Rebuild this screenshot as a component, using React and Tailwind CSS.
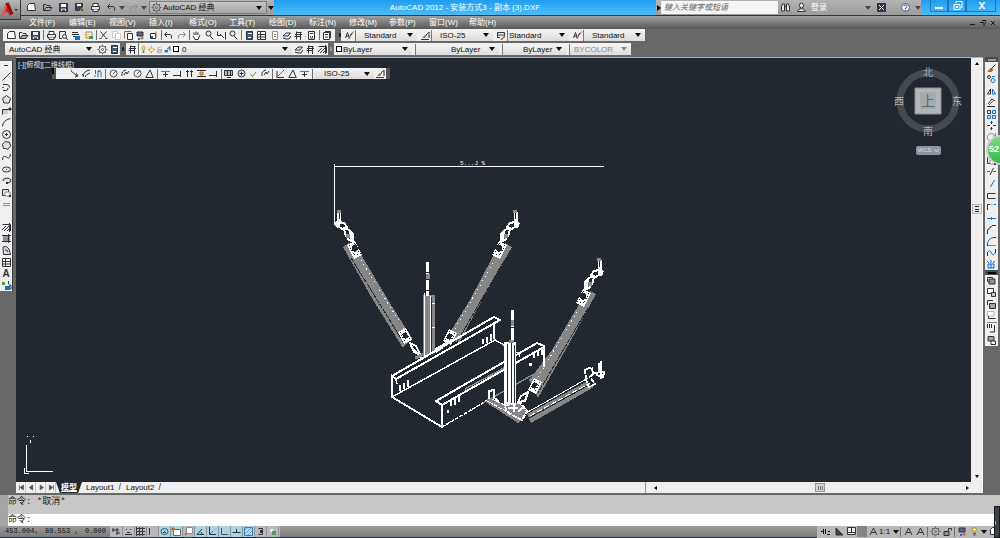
import React from 'react';
import clsx from 'clsx';

const D = '#2f3238';
const G = '#8a8d92';
const B = '#1273c4';
const O = '#b5642a';
const Y = '#f2b632';

// each glyph is a list of [path, stroke, fill] on an 11x11 grid
const GLYPHS = {
  new: [['M1.5 8.5V3.5L3.5 1.5H8.5L9.5 8.5Z', D, '#fff']],
  open: [['M1.5 8.5V2.5H4L5 3.5H8V5', D, 'none'], ['M2 8.5L4 5.5H10L8 8.5Z', D, '#9fb0bf']],
  save: [['M1.5 1.5H9.5V9.5H1.5Z', D, '#3c4654'], ['M3 2H8V5H3Z', 'none', '#f4f4f4'], ['M3.5 9V7H7.5V9', '#ddd', 'none']],
  saveas: [['M1.5 1.5H8.5V8.5H1.5Z', D, '#3c4654'], ['M3 2H7V4H3Z', 'none', '#fff'], ['M5 10L9.5 5', Y, 'none']],
  print: [['M3 4V1.5H8V4', D, '#fff'], ['M1.5 4.5H9.5V7.5H1.5Z', D, '#e8e8e8'], ['M3 7.5V9.5H8V7.5', D, '#fff']],
  undo: [['M4 2L1.5 4.5L4 7', D, 'none'], ['M2 4.5H7Q9.5 5 8.5 8.5', D, 'none']],
  redo: [['M7 2L9.5 4.5L7 7', G, 'none'], ['M9 4.5H4Q1.5 5 2.5 8.5', G, 'none']],
  preview: [['M1.5 1.5H7.5V5M1.5 1.5V8.5H4', D, 'none'], ['M4.5 6.5A2 2 0 1 0 8.5 6.5A2 2 0 1 0 4.5 6.5M8 8L10 10', D, '#dbe8f4']],
  publish: [['M2 2.5H8M2 4.5H9M3 6.5H8', D, 'none'], ['M5 6H10V10H5Z', 'none', B]],
  dwf: [['M3 2H9V8H3Z', G, '#fff7d8'], ['M1.5 4.5H6M2 7H8', Y, 'none'], ['M6 6H10V9H6Z', 'none', '#3f9c6b']],
  cut: [['M2.5 1.5L7.5 7.5M8.5 1.5L3.5 7.5', D, 'none'], ['M1.5 8.5H3.5M7.5 8.5H9.5', D, 'none']],
  copy: [['M1.5 1.5H6.5V7.5H1.5Z', '#c9c9c9', '#fff'], ['M4.5 3.5H9.5V9.5H4.5Z', '#c9c9c9', '#fff']],
  paste: [['M1.5 8.5V1.5H8.5', '#8a6a46', 'none'], ['M4.5 3.5H9.5V9.5H4.5Z', D, '#fff']],
  match: [['M2 2H8V6H2Z', D, '#596a7d'], ['M5 8H9M7 6V10', O, 'none'], ['M3 8H5V10H3Z', 'none', B]],
  block: [['M2.5 3.5H7.5V8.5H2.5Z', D, '#fff'], ['M8 1.5V8', O, 'none'], ['M3 6H5V8H3Z', 'none', B]],
  pan: [['M3 5V2.5M5 5V1.5M7 5V2.5M2 6L4 9.5H7L9 5', D, '#fff']],
  zoom: [['M2 3.5A2.5 2.5 0 1 0 7 3.5A2.5 2.5 0 1 0 2 3.5M6 6L9.5 9.5', D, 'none']],
  zoomw: [['M1.5 1.5V5.5H5M4 4L8 8M9.5 2V9.5', D, 'none']],
  props: [['M2.5 1.5H8.5V9.5H2.5Z', D, '#4b5a70'], ['M4 3.5H8M4 7.5H7', '#fff', 'none'], ['M6 5H8V7H6Z', 'none', B]],
  table: [['M1.5 1.5H9.5V9.5H1.5ZM1.5 4.5H9.5M1.5 7H9.5M4.5 1.5V9.5', D, '#fff']],
  sheet: [['M3.5 1.5H8.5V9.5H3.5ZM5 4.5H7M5 6.5H7', '#9a8f7a', '#fff']],
  calc: [['M2.5 1.5H8.5V9.5H2.5Z', D, '#fff'], ['M4 3.5H7M4 6.5H5M6 6.5H7M4 8H7', D, 'none']],
  help: [['M1.5 5.5A4 4 0 1 0 9.5 5.5A4 4 0 1 0 1.5 5.5', '#4a5b78', '#f2f6fb'], ['M4 4.5Q4 3 5.5 3T7 4.5T5.5 6V7M5.5 8V9', '#2e57a6', 'none']],
  sheets: [['M2.5 2.5H8.5V9.5H2.5ZM4 1.5H9.5V8', D, '#fff'], ['M4 4.5H7M4 7H7', D, 'none']],
  brush: [['M9.5 1.5L5 8', O, 'none'], ['M8 3L6 6', D, 'none'], ['M1.5 8L3.5 2.5L5 7M2 6H5', D, 'none'], ['M4 7H7L5 9.5Z', 'none', O]],
  dimbrush: [['M1 9.5H9M3 8L9 2V8', D, 'none'], ['M2 8L5 5H7L5 8Z', 'none', O]],
  tablebrush: [['M1.5 2.5H8.5V7.5M1.5 2.5V7.5H4M1.5 5H8', D, '#fff'], ['M4 10L9 5V7L6 10Z', 'none', O]],
  gear: [['M2 5.5A3.5 3.5 0 1 0 9 5.5A3.5 3.5 0 1 0 2 5.5M4.5 5.5A1 1 0 1 0 6.5 5.5A1 1 0 1 0 4.5 5.5', '#5d6168', 'none'], ['M5.5 0.5V2M5.5 9V10.5M0.5 5.5H2M9 5.5H10.5M2 2L3 3M8 8L9 9M9 2L8 3M2 9L3 8', '#5d6168', 'none']],
  layers: [['M3 2.5H8.5M2 4.5H9M1.5 6.5H7M3.5 1.5V9.5M7.5 3V10', D, 'none']],
  layerset: [['M2 6L5 3H9.5L7 6ZM2 8L5 9H8L10 6', D, '#dfe5eb']],
  bulb: [['M3.5 3.5A2 2 0 1 1 7.5 3.5Q7 5 6.5 6H4.5Q4 5 3.5 3.5Z', '#b88d2c', '#ffe680'], ['M4.5 7.5H6.5M4.5 9H6.5', D, 'none']],
  sun: [['M3 4H8V8H3Z', Y, '#fff2a0'], ['M5.5 1V3M1 5.5H3M8 5.5H10M5.5 8V10M2 2L3 3', '#b0882c', 'none']],
  lock: [['M3 5.5H8V9.5H3Z', '#a8acb2', '#c5c9ce'], ['M4 5V3H7', '#a8acb2', 'none']],
  unlock: [['M2 5.5H7V9.5H2Z', D, '#8b9098'], ['M6.5 5V2.5H9.5V4.5', D, 'none']],
  vp: [['M2 6H6V9H2Z', 'none', B], ['M5 5L8.5 2V7', D, '#9bd0d6']],
  line: [['M1.5 9.5L9.5 1.5', D, 'none']],
  pline: [['M2 2.5H6Q8.5 3 8.5 5.5M2 8.5H5Q7 8.5 7 6', D, 'none'], ['M1 5H3V6H1Z', 'none', B]],
  polygon: [['M5.5 1.5L9.5 4.5L8 9H3L1.5 4.5Z', D, '#e2e7ec']],
  rect: [['M1.5 8.5V3.5H9.5', D, 'none'], ['M2 4H7V8H2Z', 'none', '#c9ced6'], ['M8 2H10V4H8Z', D, D]],
  arc: [['M1.5 9.5Q2 3 9.5 1.5', D, 'none']],
  circle: [['M1.5 5.5A4 4 0 1 0 9.5 5.5A4 4 0 1 0 1.5 5.5', D, '#eceff2'], ['M4 5.5H7M5.5 4V7', D, 'none']],
  cloud: [['M2.5 3Q4 0.5 6 2Q9 1 9 4Q10.5 6 8.5 7.5Q7 10.5 4.5 8.5Q1.5 9.5 2 6.5Q0.5 4.5 2.5 3', D, '#dde1e6']],
  spline: [['M1.5 8Q2 3 4.5 4.5T7.5 6Q9 6 9.5 2', D, 'none']],
  ellipse: [['M1.5 5.5A4 2.5 0 1 0 9.5 5.5A4 2.5 0 1 0 1.5 5.5', D, '#eceff2'], ['M5 5.5H6', D, 'none']],
  earc: [['M2 6A4 2.5 0 1 1 7 8', D, '#dde1e6'], ['M5 7H7V9H5Z', 'none', D]],
  insert: [['M1.5 2.5H7.5V8.5H1.5Z', D, '#e2e7ec'], ['M4 5H9V9H4Z', G, '#fff'], ['M8 8H10V10H8Z', 'none', D]],
  point: [['M2 4.5H9M2 6.5H9', G, 'none']],
  dot: [['M5 5H6V6H5Z', 'none', '#fff']],
  hatch: [['M1.5 2.5H9.5V9M3 9L9 3M1 8L5 4M6 9L9 6M8.5 1V10', D, 'none']],
  gradient: [['M2 3H9V8H2Z', 'none', '#8b9098'], ['M1 2.5H10M1 8.5H10M7.5 1V10', D, 'none']],
  region: [['M2 2Q6 0 8 4L9.5 9.5H2.5Z', D, '#d5dae0'], ['M4 5Q6 4 7 7', D, 'none']],
  addsel: [['M1 2H4V5H1Z', 'none', '#5f9a35'], ['M7.5 1V4M8 5H10V9H8', D, 'none'], ['M4 6H9V10H4Z', 'none', B]],
  dimlin: [['M2 3L8 8M7 5L9 8L6 9', D, 'none'], ['M1 2H3', G, 'none']],
  dimarc: [['M2 9Q2 3 9 2M4 9Q5 6 9 5M1 6L3 8', D, 'none']],
  ordinate: [['M2.5 2V6M1 8H3M5 3V9M8 4V9', B, 'none'], ['M5 3H8', D, 'none']],
  radius: [['M2 5.5A3.5 3.5 0 1 0 9 5.5A3.5 3.5 0 1 0 2 5.5M5 6L8 3', '#55595f', 'none']],
  jogged: [['M2 8Q1 3 6 2M4 7L6 4L7 6L9 3', D, 'none']],
  angular: [['M1.5 9.5H9.5M2 9L6 2L9 9', D, 'none']],
  quick: [['M1 3.5H10', O, 'none'], ['M3 6.5H8M5.5 4V9', D, 'none']],
  baseline: [['M1 7.5H8M8.5 3V9', D, 'none']],
  continue: [['M3.5 2V9M7.5 2V9M2 3.5H5M6 3.5H9', D, 'none']],
  space: [['M1 2.5H10M1 8.5H10', D, 'none'], ['M4 4H7V7H4Z', O, Y]],
  tol: [['M1.5 2.5H9.5V7.5H1.5ZM4.5 2V8M7.5 2V8M4 9.5H8', D, '#bbb']],
  center: [['M2 5.5A3.5 3.5 0 1 0 9 5.5A3.5 3.5 0 1 0 2 5.5M3.5 5.5H7.5M5.5 3.5V7.5', D, 'none']],
  check: [['M2.5 6L4.5 8.5L8 4', '#4e9c2d', 'none']],
  oblique: [['M1.5 9.5H9M2 9V3M3 8L9 2', D, 'none'], ['M4 7L8 3', O, 'none']],
  erase: [['M9.5 1.5L5 6', D, 'none'], ['M4.5 5.5L2 8.5H5.5L7 6.5Z', O, O]],
  copyobj: [['M1.5 3A1.5 1.5 0 1 0 4.5 3A1.5 1.5 0 1 0 1.5 3', D, 'none'], ['M6 2.5H9M5 6A1.5 1.5 0 1 0 9 7A1.5 1.5 0 1 0 5 6', B, 'none']],
  mirror: [['M4.5 3V8H1.5Z', D, 'none'], ['M6.5 3V8H9.5Z', B, 'none']],
  offset: [['M2 7L6 2L9 4M1 9.5H9', D, 'none'], ['M3 8L7 4', B, 'none']],
  array: [['M1.5 1.5H4.5V4.5H1.5Z', D, 'none'], ['M6.5 1.5H9.5V4.5H6.5ZM1.5 6.5H4.5V9.5H1.5ZM6.5 6.5H9.5V9.5H6.5Z', B, '#cfe4f6']],
  move: [['M5.5 1V4M5.5 7V10M1 5.5H4M7 5.5H10M4.5 2.5H6.5M4.5 8.5H6.5', D, 'none']],
  rotate: [['M8.5 3A4 4 0 1 0 9 7', G, 'none'], ['M9.5 1V4H7', G, 'none']],
  trim: [['M1 5.5H4M7 5.5H10', B, 'none'], ['M7.5 2L4 9', D, 'none']],
  extend: [['M8.5 2L4.5 9', B, 'none']],
  break1: [['M9.5 3.5H1.5V8.5H9.5', D, 'none']],
  break2: [['M1.5 9V3.5H4', D, 'none'], ['M5.5 3.5H6.5M8 3.5H10', B, 'none']],
  join: [['M1 5.5H10M5.5 4V7', B, 'none']],
  chamfer: [['M1.5 10V6L5.5 2', D, '#dfe3e8'], ['M2 6L6 2', B, 'none'], ['M6 1.5H10', D, 'none']],
  fillet: [['M1.5 10V8M8 1.5H10', D, 'none'], ['M1.5 8Q2 2 8 1.5', B, 'none'], ['M2 9.5H10', G, 'none']],
  blend: [['M1.5 9V5M9.5 6V2', D, 'none'], ['M2 5Q4 2 5.5 6T9 6', B, 'none']],
  explode: [['M2 5H8V9H2Z', B, '#cfe4f6'], ['M5 1V4M1 2L3 4M9 2L7 4M5 5V9', B, 'none']],
  front: [['M1.5 1.5H6.5V5.5H1.5Z', D, '#fff'], ['M3 3H9V8H3Z', D, '#8d939b']],
  back: [['M1.5 1.5H7.5V6.5H1.5Z', D, '#fff'], ['M5.5 5.5H9.5V9.5H5.5Z', D, '#c6cad0']],
  above: [['M1.5 6V1.5H7', D, 'none'], ['M3.5 4.5H9.5V9.5H3.5Z', D, '#9aa0a8']],
  under: [['M1.5 1.5H8V6H1.5Z', '#b5b9be', '#fff'], ['M2.5 6V8.5H9.5', D, 'none']],
  annot: [['M1.5 1V5M3.5 1V5M5.5 1V5M8.5 2V9H4', D, 'none']],
  hatchback: [['M2 1.5H8V6H2Z', D, '#9aa0a8'], ['M5 6H9.5V9.5H5Z', D, '#fff']],
  binoc: [['M2.5 2H4.5V9H1.5V5ZM6.5 2H8.5L9.5 5V9H6.5Z', D, '#e3e5e8'], ['M4.5 4.5H6.5', D, 'none']],
  user: [['M3.5 3.5A2 2.5 0 1 0 7.5 3.5A2 2.5 0 1 0 3.5 3.5M1.5 9.5Q2 7 5.5 6.5Q9 7 9.5 9.5Z', D, '#e8eaed']],
  exchange: [['M1.5 1.5H9.5V9.5H1.5Z', D, '#32394a'], ['M3 3L8 8M8 3L3 8', '#fff', 'none']],
  grid: [['M1.5 1V10M4.5 1V10M7.5 1V10M1 2.5H10M1 5.5H10M1 8.5H10', '#34373c', 'none']],
  snap: [['M2 8.5H9M4 6.5H7M3 3.5H4M7 3.5H8', D, 'none']],
  infer: [['M2 2V6M1 4H8M6 2V9M5 7H9', D, 'none']],
  ortho: [['M2.5 2V9', D, 'none']],
  polar: [['M2 5.5A3.5 3 0 1 0 9 5.5A3.5 3 0 1 0 2 5.5M4 6.5H7M5.5 5V7', '#35576c', 'none']],
  osnap: [['M2.5 3.5H9.5V9.5H2.5Z', '#5f6a73', '#fff'], ['M1 2H3V4H1Z', O, O]],
  osnap3d: [['M3.5 1.5H9.5V7.5H3.5Z', G, '#fff'], ['M2 7H4V9H2Z', 'none', O]],
  angle: [['M2 8.5H9M2 8.5L7 3M6 6L7 8', D, 'none']],
  ducs: [['M2.5 1V8.5H9', D, 'none'], ['M4 7L9 2', Y, 'none'], ['M3 8L6 5', O, 'none']],
  lwt: [['M2.5 2V8.5H9', '#35576c', 'none']],
  dyn: [['M1.5 6.5H9.5M5.5 3V7', D, 'none']],
  tpy: [['M1.5 1.5H9.5V9.5H1.5Z', '#3d7eb5', '#b4dcf4'], ['M2 4L4 2M2 8L8 2M5 9L9 5', '#5d9fd2', 'none']],
  qp: [['M3.5 2.5H7.5V8.5H3.5', D, 'none'], ['M5 4H7V7H5Z', 'none', D]],
  sc: [['M3 3H6V6H3Z', 'none', '#eee'], ['M5 5H9V9H5Z', 'none', '#4da54b']],
  model: [['M1 5.5H3M3.5 3V8M5.5 3V8M8 5.5H10M7 8.5H10', '#111', 'none']],
  qv: [['M2 2V9H9Z', D, '#444']],
  qvd: [['M1.5 1.5H9.5V8.5H1.5Z', D, '#f0f0f0'], ['M1 6.5H10M5.5 2V6', D, 'none']],
  scale: [['M2 9L5.5 2L9 9M3.5 6.5H7.5', D, 'none']],
};

const FONT = "font-['Liberation_Sans','Noto_Sans_CJK_SC',sans-serif]";
const MONO = "font-['Liberation_Mono','Noto_Sans_CJK_SC',monospace]";

function Glyph({ name, size = 11 }) {
  return (
    <svg width={size} height={size} viewBox="0 0 11 11" aria-hidden="true" className="block shrink-0">
      {GLYPHS[name].map(([d, stroke, fill]) => (
        <path key={d} d={d} stroke={stroke} fill={fill} />
      ))}
    </svg>
  );
}

function Tool({ name, active, className }) {
  return (
    <button
      type="button"
      aria-label={name}
      className={clsx('flex h-3 w-3 shrink-0 items-center justify-center', active && 'bg-[#a9d3df]', className)}
    >
      <Glyph name={name} />
    </button>
  );
}

function Caret({ color = '#111' }) {
  return (
    <svg width="6" height="4" viewBox="0 0 6 4" aria-hidden="true" className="block shrink-0">
      <path d="M0 0H6L3 4Z" fill={color} />
    </svg>
  );
}

const Sep = () => <span className="mx-px h-2.5 w-px shrink-0 bg-[#6f6f6f]" />;

// "|" in a list of tools stands for a separator
function Tools({ items }) {
  return items.map((item, i) => (item === '|' ? <Sep key={i} /> : <Tool key={i} name={item} />));
}

function Combo({ label, value, className, pad = 'pl-1', disabled }) {
  return (
    <div className={clsx('relative flex h-[11px] items-center bg-linear-to-b from-[#f4f4f4] to-[#dcdcdc]', className)}>
      <select
        aria-label={label}
        disabled={disabled}
        className={clsx('h-full w-full appearance-none text-[8px] leading-[11px]', pad, disabled ? 'text-[#8d8d8d]' : 'text-[#111]')}
      >
        <option>{value}</option>
      </select>
      <span className="pointer-events-none absolute right-1">
        <Caret color={disabled ? '#8d8d8d' : '#111'} />
      </span>
    </div>
  );
}

function TitleBar() {
  return (
    <header className="flex h-4 shrink-0 items-stretch border-b border-[#343434] bg-[#a8a8a8]">
      <div className="flex w-[274px] shrink-0 items-center bg-linear-to-b from-[#b3b3b3] to-[#9c9c9c] pl-[25px]">
        <div className="flex w-[124px] shrink-0 items-center gap-0.5">
          <div className="flex items-center gap-1">
            {['new', 'open', 'save', 'saveas', 'print', 'undo'].map((n) => <Tool key={n} name={n} />)}
          </div>
          <Caret color="#4a4a4a" />
          <Tool name="redo" />
          <Caret color="#4a4a4a" />
        </div>
        <div className="flex h-[13px] w-[118px] shrink-0 items-center border border-[#7d7d7d] bg-linear-to-b from-[#c6c6c6] to-[#a5a5a5] pl-px">
          <Glyph name="gear" />
          <Combo label="工作空间" value="AutoCAD 经典" className="w-full bg-none" pad="pl-px" />
        </div>
        <span className="pl-px"><Caret /></span>
      </div>
      <h1 className="flex min-w-0 flex-1 items-center justify-center bg-linear-to-b from-[#1f9df0] to-[#4bbcf8] text-[8px] text-white">
        AutoCAD 2012 - 安装方式3 - 副本 (3).DXF
      </h1>
      <div className="flex w-[265px] shrink-0 items-center bg-linear-to-b from-[#b3b3b3] to-[#9c9c9c]">
        <span className="flex w-[5px] shrink-0 justify-center text-[#111]">
          <svg width="4" height="6" viewBox="0 0 4 6" aria-hidden="true"><path d="M0 0L4 3L0 6Z" /></svg>
        </span>
        <input
          type="text"
          aria-label="搜索"
          placeholder="键入关键字或短语"
          className="h-[13px] w-[117px] shrink-0 bg-[#f5f5f5] pl-[3px] text-[8px] italic placeholder:text-[#666]"
        />
        <div className="flex items-center gap-1 pl-px">
          <Tool name="binoc" />
          <Tool name="user" />
          <span className="w-[50px] shrink-0 text-[8px] text-white">登录</span>
          <Caret color="#4a4a4a" />
          <Tool name="exchange" />
          <span className="w-1" />
          <Tool name="help" />
          <Caret color="#4a4a4a" />
        </div>
      </div>
      <div className="flex w-[79px] shrink-0 justify-center bg-linear-to-b from-[#1f9df0] to-[#4bbcf8] pl-1 text-white">
        {[
          ['最小化', 'M3 7.5H11M3 8.5H11'],
          ['还原', 'M4 4.5H10V9.5H4ZM6 3V1.5H12V7.5H11M6 6.5H8V7.5H6Z'],
          ['关闭', 'M5 2L10 9M10 2L5 9M6 2L11 9M11 2L6 9'],
        ].map(([name, d]) => (
          <button
            key={name}
            type="button"
            aria-label={name}
            className="flex h-3 w-[18px] items-center justify-center border border-t-0 border-[#1b76bb] last:w-[30px]"
          >
            <svg width="14" height="11" viewBox="0 0 14 11" fill="none" stroke="currentColor"><path d={d} /></svg>
          </button>
        ))}
      </div>
    </header>
  );
}

const MENUS = ['文件(F)', '编辑(E)', '视图(V)', '插入(I)', '格式(O)', '工具(T)', '绘图(D)', '标注(N)', '修改(M)', '参数(P)', '窗口(W)', '帮助(H)'];

function MenuBar() {
  return (
    <nav className="flex h-[13px] shrink-0 items-center bg-linear-to-b from-[#a0a0a0] to-[#585858] pl-[29px] text-[8px] leading-3 text-white">
      {MENUS.map((m) => (
        <button key={m} type="button" className="w-10 shrink-0 text-left">{m}</button>
      ))}
      <div className="ml-auto flex gap-1 pr-1 text-[#1c1c1c]">
        {['M0 5.5H5', 'M2 1.5H6V5M0 3.5H4V7', 'M1 2L5 6M5 2L1 6'].map((d) => (
          <svg key={d} width="6" height="8" viewBox="0 0 6 8" fill="none" stroke="currentColor"><path d={d} /></svg>
        ))}
      </div>
    </nav>
  );
}

const STANDARD = [
  'new', 'open', 'save', '|', 'print', 'preview', 'publish', 'dwf', '|', 'cut', 'copy', 'paste', 'match', 'block', '|',
  'undo', 'redo', '|', 'pan', 'zoom', 'zoomw', 'zoom', '|', 'props', 'table', 'sheet', 'layerset', 'layers', 'calc', '|', 'sheets',
];

const STYLES = [
  ['brush', '文字样式', 'Standard', 'pl-2'],
  ['dimbrush', '标注样式', 'ISO-25', 'pl-2'],
  ['tablebrush', '表格样式', 'Standard', 'pl-px'],
  ['brush', '多重引线样式', 'Standard', 'pl-2'],
];

function Toolbars() {
  return (
    <div className="flex shrink-0 flex-col gap-0.5 pb-0.5">
      <div className="flex h-3 items-center pl-[3px]">
        <div className="flex h-3 w-[332px] items-center justify-between bg-[#efefef] px-0.5">
          <Tools items={STANDARD} />
        </div>
        <span className="ml-1 h-1 w-0.5 bg-[#222]" />
        <div className="flex h-3 items-center bg-[#efefef]">
          {STYLES.map(([icon, label, value, pad]) => (
            <div key={label} className="flex items-center pl-0.5">
              <Tool name={icon} />
              <Combo label={label} value={value} className="w-[62px] border-l border-[#777]" pad={pad} />
            </div>
          ))}
        </div>
      </div>
      <div className="flex h-3 items-center pl-[5px]">
        <div className="flex h-3 w-[115px] items-center bg-[#efefef]">
          <Combo label="工作空间" value="AutoCAD 经典" className="w-[91px]" />
          <Tool name="gear" />
          <Tool name="props" />
        </div>
        <span className="mx-0.5 h-1 w-0.5 bg-[#222]" />
        <div className="flex h-3 w-[202px] items-center bg-[#efefef]">
          <Tool name="layers" />
          <span className="h-full w-px bg-[#777]" />
          <div className="flex min-w-0 flex-1 items-center">
            {['bulb', 'sun', 'lock', 'vp'].map((n) => (
              <span key={n} className="w-2 shrink-0"><Glyph name={n} size={9} /></span>
            ))}
            <span className="mx-0.5 size-1.5 shrink-0 border border-black bg-white" />
            <Combo label="图层" value="0" className="flex-1" pad="pl-px" />
          </div>
          <Tool name="layerset" />
          <Tool name="layers" />
          <Tool name="hatch" />
        </div>
        <span className="mx-0.5 h-1 w-0.5 bg-[#999]" />
        <div className="flex h-3 items-center gap-[3px] bg-[#efefef] pl-0.5">
          <div className="flex items-center">
            <span className="size-1.5 shrink-0 border border-black bg-white" />
            <Combo label="颜色" value="ByLayer" className="w-[70px]" pad="pl-px" />
          </div>
          <Combo label="线型" value="ByLayer" className="w-[84px] border-l border-[#777]" pad="pl-[35px]" />
          <Combo label="线宽" value="ByLayer" className="w-[64px] border-l border-[#777]" pad="pl-[20px]" />
          <Combo label="打印样式" value="BYCOLOR" className="w-[62px] border-l border-[#777]" pad="pl-1" disabled />
        </div>
      </div>
    </div>
  );
}

const DRAW = [
  'line', 'pline', 'polygon', 'rect', 'arc', 'circle', 'cloud', 'spline', 'ellipse', 'earc',
  'insert', 'point', 'dot', 'hatch', 'gradient', 'region', 'table',
];
const MODIFY = [
  'erase', 'copyobj', 'mirror', 'offset', 'array', 'move', 'rotate', 'rect', 'insert', 'trim',
  'extend', 'break1', 'break2', 'join', 'chamfer', 'fillet', 'blend', 'explode',
];

function DrawBar() {
  return (
    <aside className="w-4 shrink-0 pt-1">
      <div className="flex h-[230px] w-[13px] flex-col items-center justify-between border-r border-[#3b3b3b] bg-[#efefef] pt-1">
        <span className="mb-1 h-px w-1 bg-[#333]" />
        {DRAW.map((n) => <Tool key={n} name={n} className="max-h-[11px]" />)}
        <button type="button" aria-label="多行文字" className="h-[11px] text-[10px] leading-[11px] font-bold text-[#30343a]">A</button>
        <Tool name="addsel" className="max-h-[11px]" />
      </div>
    </aside>
  );
}

function ModifyBar() {
  return (
    <aside className="relative flex w-[17px] shrink-0 flex-col items-start pl-0.5">
      <div className="flex h-[213px] w-[13px] flex-col items-center justify-between bg-[#efefef]">
        <span className="flex h-[5px] w-full items-center justify-center bg-[#4c4c4c]"><i className="h-0.5 w-2 bg-[#999]" /></span>
        {MODIFY.map((n, i) => <Tool key={i} name={n} className="max-h-[11px]" />)}
      </div>
      <div className="flex h-[76px] w-[13px] flex-col items-center justify-between bg-[#efefef]">
        <span className="flex h-[5px] w-full items-center justify-center bg-[#4c4c4c]"><i className="h-0.5 w-2 bg-black" /></span>
        {['front', 'back', 'above', 'under'].map((n) => <Tool key={n} name={n} className="max-h-[11px]" />)}
        <span className="h-px w-2.5 bg-[#888]" />
        {['annot', 'hatchback'].map((n) => <Tool key={n} name={n} className="max-h-[11px]" />)}
      </div>
      {/* Speed ball sits over the toolbar and runs off the window */}
      <div className="absolute top-[78px] left-[3px] flex h-[30px] w-[30px] items-center rounded-full border-2 border-[#c6cfc8] bg-linear-to-b from-[#76dd83] to-[#35b94d] pl-px text-[9px] font-bold text-white">
        52
      </div>
    </aside>
  );
}

// Hook, shackle and clamp at the end of a brace; drawn for a brace leaning to the left
function Hanger({ x, y, flip }) {
  return (
    <g transform={`translate(${x} ${y}) scale(${flip ? -1 : 1} 1)`} fill="none" stroke="#fff" shapeRendering="crispEdges">
      <path d="M-1 2V14M0 2V14M2 2V14M1 9V14" />
      <path d="M-1 0H3V3H-1Z" fill="#8a8a8a" stroke="none" />
      <path d="M-4 13L-1 11L2 13L2 16L-1 18L-3 16Z" fill="#fff" stroke="none" />
      <path d="M1 12L6 13L9 17L6 20L1 17Z" strokeWidth="2" />
      <path d="M6 18L11 20L15 24L15 32L11 30L7 24Z" strokeWidth="2" />
      <path d="M11 21L15 24L15 33L12 31Z" fill="#fff" stroke="none" />
      <path d="M8 24H12V28H8Z" fill="#8a8a8a" stroke="none" />
      <path d="M9 35L17 31L24 45L16 49Z" fill="#fff" stroke="none" />
      <path d="M14 36L18 34L21 39L17 42L14 40Z" fill="#22282f" stroke="none" />
      <path d="M11 35L18 48M16 33L23 45M16 44H21" stroke="#22282f" strokeDasharray="1 2" />
    </g>
  );
}

// Smaller clamp that closes the foot of a brace, centred on x, y
function Clamp({ x, y, flip }) {
  return (
    <g transform={`translate(${x} ${y}) scale(${flip ? -1 : 1} 1)`} shapeRendering="crispEdges" stroke="none">
      <path d="M-7 -4L1 -8L7 4L-1 8Z" fill="#fff" />
      <path d="M-3 -2L1 -4L4 1L0 3Z" fill="#22282f" />
      <path d="M-5 -4L1 7M0 -6L5 4" fill="none" stroke="#22282f" strokeDasharray="1 2" />
    </g>
  );
}

function Brace({ points, gap, dots }) {
  return (
    <g shapeRendering="crispEdges">
      <polygon points={points} fill="#868686" stroke="none" />
      <path d={gap} stroke="#22282f" strokeWidth="1" strokeDasharray="5 1" fill="none" />
      <path d={dots} stroke="#fff" strokeWidth="1" strokeDasharray="1 4" fill="none" />
    </g>
  );
}

function Drawing() {
  return (
    <svg viewBox="16 58 955 424" className="block h-full w-full" fill="none" stroke="#fff" role="img" aria-label="支吊架三维图">
      {/* Dimension */}
      <g shapeRendering="crispEdges">
        <path d="M334.5 164V224M334 166.5H604" />
      </g>
      <text x="460" y="165" fontSize="6" fill="#fff" stroke="none" className={MONO}>5...J %</text>

      {/* Braces */}
      <Brace points="343,247 349,243 362,256 388,300 412,338 403,348 373,300" gap="M351 258L404 343" dots="M361 260L407 334" />
      <Brace points="512,247 505,243 493,256 470,300 447,337 459,343 482,300" gap="M504 261L457 342" dots="M493 263L452 334" />
      <Brace points="596,294 590,291 578,306 552,350 529,380 538,398 570,342" gap="M588 308L538 393" dots="M577 312L537 379" />
      <Hanger x={338} y={210} />
      <Hanger x={516} y={210} flip />
      <Hanger x={600} y={258} flip />

      {/* Lower clamps */}
      <Clamp x={405} y={336} />
      <Clamp x={450} y={337} flip />
      <Clamp x={535} y={386} flip />
      <g shapeRendering="crispEdges" strokeWidth="2">
        <path d="M410 343L416 346L420 354L414 352ZM413 349L421 358" />
        <path d="M446 343L441 346L434 350M443 347L436 352" />
        <path d="M528 392L521 396L518 402L525 401ZM522 402L514 406" />
        <path d="M415 358L422 355L434 352" stroke="#8a8a8a" strokeWidth="3" />
      </g>

      {/* Rear post */}
      <g shapeRendering="crispEdges">
        <path d="M423 295H435V352L423 357Z" fill="#868686" stroke="none" />
        <path d="M424.5 293V357M430.5 296V354" />
        <path d="M431.5 297V353" stroke="#22282f" />
        <path d="M427.5 262V296" strokeWidth="3" strokeDasharray="10 1 5 2" />
        <path d="M427.5 274V279" stroke="#8a8a8a" strokeWidth="4" />
        <path d="M432 303.5H435M432 327.5H435" />
      </g>

      {/* Cable tray */}
      <g shapeRendering="crispEdges" strokeWidth="1.5">
        <path d="M392 376L494 317L500 320L396 379L392 376V397L442 427V405L436 401L537 343L544 346V367" strokeWidth="2" />
        <path d="M392 397L495 340L504 345M494 322V339M396 380L397 384" />
        <path d="M442 405L544 347" strokeWidth="2" />
        <path d="M442 427L483 403" strokeDasharray="4 1" />
        <path d="M483 403L543 369M465 389L504 368" stroke="#8a8a8a" />
        <path d="M400 385V391M404 383V389M408 380V387M483 339V344M487 337V343M491 334V341" strokeWidth="2" />
        <path d="M451 400V406M455 398V405M459 396V402M534 353V358M538 351V356M542 349V355" strokeWidth="2" />
        <path d="M447 411H449M529 364H532" strokeWidth="3" />
      </g>

      {/* Front post */}
      <g shapeRendering="crispEdges">
        <path d="M504 342H516V407H504Z" fill="#fff" stroke="none" />
        <path d="M507.5 344V402M511.5 341V406M514.5 345V405" stroke="#22282f" />
        <path d="M512 310V342" strokeWidth="3" strokeDasharray="12 1 4 1" />
        <path d="M512 320V326M509 341H514" stroke="#8a8a8a" strokeWidth="3" />
        <path d="M516 352L519 353V357" />
      </g>

      {/* Bottom braces */}
      <g shapeRendering="crispEdges">
        <path d="M484 401L490 398L521 413L525 418L518 423Z" fill="#868686" stroke="none" />
        <path d="M485 400L521 419M492 399L519 412" strokeDasharray="4 1" />
        <path d="M489 399V391L494 390V398L499 401" strokeWidth="2" />
        <path d="M505 405L520 403L527 411L522 420L512 415L506 411Z" fill="#868686" strokeWidth="2" strokeDasharray="5 1" />
        <path d="M508 408H518M514 404V412M518 412L524 406" strokeWidth="2" />
        <path d="M527 414L586 382L594 387L531 423Z" fill="#868686" stroke="none" />
        <path d="M529 418L589 385" stroke="#22282f" />
        <path d="M526 413L560 394L588 378" />
        <path d="M530 416L590 383" strokeDasharray="6 2" />
        <path d="M586 380L585 369L592 368L593 374L590 377L595 384L589 387Z" strokeWidth="2" strokeDasharray="5 1" />
        <path d="M593 373L604 372L603 377L596 375M601 361V379M599 363V372" strokeWidth="2" />
      </g>

      {/* UCS icon */}
      <g shapeRendering="crispEdges">
        <path d="M26.5 445V471.5H53M24.5 468V473.5H29" />
        <path d="M27 436.5H28M33 436.5H34M30.5 440V443" />
      </g>
    </svg>
  );
}

function Compass() {
  return (
    <div className="absolute top-1.5 right-2 flex w-[70px] flex-col items-center gap-2">
      <svg width="70" height="74" viewBox="0 0 70 74" className={FONT} fontSize="10" textAnchor="middle">
        <circle cx="35" cy="37" r="28" fill="none" stroke="#434a52" strokeWidth="7" />
        <path d="M22 24H48V50H22Z" fill="#b3b4b5" stroke="#8b8e91" />
        <path d="M27 28H43V45H27Z" fill="#a3abaf" />
        <text x="35" y="42" fontSize="14" fill="#5f676b">上</text>
        <g fill="#b5b5b5">
          <text x="35" y="12">北</text>
          <text x="35" y="71">南</text>
          <text x="6" y="41">西</text>
          <text x="64" y="41">东</text>
        </g>
      </svg>
      <button type="button" className="flex h-[9px] w-[25px] items-center justify-center gap-0.5 rounded-xs bg-[#8d93a3] text-[6px] leading-[9px] text-[#d9dce2]">
        WCS
        <svg width="5" height="4" viewBox="0 0 5 4" fill="none" stroke="currentColor"><path d="M0 0L2.5 3L5 0" /></svg>
      </button>
    </div>
  );
}

const DIMENSION = [
  'dimlin', 'dimarc', 'ordinate', '|', 'radius', 'jogged', 'radius', 'angular', '|', 'quick', 'baseline', 'continue',
  'space', 'baseline', '|', 'tol', 'center', 'check', 'jogged', '|', 'oblique', 'angular', 'quick', '|',
];

function Viewport() {
  return (
    <div className="relative min-w-0 flex-1 overflow-hidden bg-[#22282f]">
      <Drawing />
      <span className="absolute top-0.5 left-0.5 text-[7px] leading-[10px] text-[#e2e2e2]">[-][俯视][二维线框]</span>
      <div className="absolute top-[10px] left-9 flex h-[11px] w-[338px] items-center bg-[#efefef]">
        <span className="h-full w-1 bg-[#555]"><i className="block h-1.5 w-0.5 bg-black" /></span>
        <div className="flex flex-1 items-center justify-between pl-3">
          <Tools items={DIMENSION} />
        </div>
        <Combo label="标注样式" value="ISO-25" className="w-[60px]" pad="pl-2.5" />
        <Tool name="dimbrush" />
        <span className="h-full w-1 bg-[#555]" />
      </div>
      <Compass />
    </div>
  );
}

function ScrollColumn() {
  return (
    <div className="flex w-3 shrink-0 flex-col items-center justify-between border-r border-white bg-[#efefef] py-1">
      <svg width="4" height="3" viewBox="0 0 4 3"><path d="M0 3L2 0L4 3Z" /></svg>
      <span className="mb-[122px] flex h-[10px] w-2.5 flex-col justify-evenly border border-[#bbb] bg-[#e4e4e4] px-0.5">
        <i className="h-px bg-[#333]" />
        <i className="h-px bg-[#333]" />
        <i className="h-px bg-[#333]" />
      </span>
      <svg width="4" height="3" viewBox="0 0 4 3"><path d="M0 0L2 3L4 0Z" /></svg>
    </div>
  );
}

function LayoutTabs() {
  return (
    <div className="flex h-[11px] shrink-0 items-center bg-[#efefef]">
      {['M3 2V8M8 2L4 5L8 8Z', 'M7 2L3 5L7 8Z', 'M4 2L8 5L4 8Z', 'M8 2V8M3 2L7 5L3 8Z'].map((d) => (
        <button key={d} type="button" aria-label="切换布局" className="flex h-full w-[10px] items-center justify-center border-r border-[#c4c4c4]">
          <svg width="8" height="9" viewBox="0 0 10 10" fill="#555" stroke="#555"><path d={d} /></svg>
        </button>
      ))}
      <button type="button" className="h-full w-[26px] bg-[#22282f] text-[8px] leading-[10px] font-bold text-white underline [clip-path:polygon(0_0,100%_0,85%_100%,15%_100%)]">
        模型
      </button>
      <button type="button" className="ml-1 text-[8px] leading-[11px] text-[#111]">Layout1</button>
      <span className="mx-1 text-[9px] leading-[11px] text-[#333]">/</span>
      <button type="button" className="ml-px text-[8px] leading-[11px] text-[#111]">Layout2</button>
      <span className="mx-1 text-[9px] leading-[11px] text-[#333]">/</span>
      <div className="ml-auto flex h-full w-[35%] items-center justify-between border-l border-[#999] pr-[14px] pl-2">
        <svg width="3" height="4" viewBox="0 0 3 4"><path d="M3 0L0 2L3 4Z" /></svg>
        <span className="ml-[18px] flex h-[9px] w-2.5 items-center justify-evenly border border-[#999] bg-[#d4d4d4]">
          <i className="h-1 w-px bg-[#777]" />
          <i className="h-1 w-px bg-[#777]" />
          <i className="h-1 w-px bg-[#777]" />
        </span>
        <svg width="3" height="4" viewBox="0 0 3 4"><path d="M0 0L3 2L0 4Z" /></svg>
      </div>
    </div>
  );
}

function CommandLine() {
  return (
    <section className={clsx('flex h-[31px] shrink-0 flex-col border-l-8 border-[#a5a5a5] text-[9px] text-[#222]', MONO)}>
      <p className="h-[19px] bg-[#c7c7c7] pt-px leading-3">命令: *取消*</p>
      <label className="flex h-3 items-center bg-white leading-3">
        命令:
        <input type="text" className="h-full min-w-0 flex-1 pl-1 outline-none" />
      </label>
    </section>
  );
}

const STATUS = [
  ['infer'], ['snap'], ['grid'], ['ortho'], ['polar', true], ['osnap', true], ['osnap3d'], ['angle', true],
  ['ducs', true], ['lwt', true], ['dyn', true], ['tpy', true], ['qp'], ['sc'],
];

function StatusBar() {
  return (
    <footer className="flex h-3 shrink-0 items-center border-b border-[#22364c] bg-linear-to-b from-[#9a9a9a] to-[#7c7c7c] text-[7px] text-[#111]">
      <div className={clsx('flex w-[110px] shrink-0 justify-between pr-1 pl-[5px]', MONO)}>
        <span>453.004,</span>
        <span>80.553 ,</span>
        <span>0.000</span>
      </div>
      <div className="flex bg-[#b9b9b9] px-px">
        {STATUS.map(([n, active]) => <Tool key={n} name={n} active={active} className="max-h-[11px] border-r border-[#8d9498]" />)}
      </div>
      <div className="ml-auto flex items-center bg-[#b9b9b9]">
        <Tool name="model" className="w-4" />
        <Tool name="qv" />
        <Tool name="qvd" />
        <span className="h-[11px] w-2.5 bg-[#858585]" />
        <Tool name="scale" />
        <span className="w-3.5 text-[8px] leading-[11px]">1:1</span>
        <Caret />
        <Tools items={['|', 'scale', 'scale', '|', 'gear', 'unlock', '|', 'match', 'bulb']} />
        <span className="px-px"><Caret /></span>
        <Tool name="new" />
      </div>
    </footer>
  );
}

export default function App() {
  return (
    <div lang="zh-CN" className={clsx('relative flex h-screen w-full flex-col overflow-hidden bg-[#686868]', FONT)}>
      <TitleBar />
      <MenuBar />
      <Toolbars />
      <main className="flex min-h-0 flex-1">
        <DrawBar />
        <div className="flex min-w-0 flex-1 flex-col border-t border-[#b0b0b0]">
          <div className="flex min-h-0 flex-1">
            <Viewport />
            <ScrollColumn />
          </div>
          <LayoutTabs />
        </div>
        <ModifyBar />
      </main>
      <span className="h-0.5 shrink-0" />
      <CommandLine />
      <StatusBar />
      {/* Application button */}
      <button type="button" aria-label="应用程序菜单" className="absolute top-0 left-0 flex h-5 w-[21px] items-center border-r border-b border-[#3a3a3a] bg-linear-to-b from-[#b9b9b9] to-[#7c7c7c]">
        <svg width="21" height="20" viewBox="0 0 21 20">
          <path d="M2 16L6 3L9 2L14 14L10 16L8 12L5 13L4 17Z" fill="#cf1f22" />
          <path d="M6 3L9 2L14 14L11 15L8 8Z" fill="#8f1115" />
          <path d="M2 16L6 3L7 7L4 17Z" fill="#f0575a" />
          <path d="M15 9H19L17 11Z" fill="#333" />
        </svg>
      </button>
      <span className="absolute right-0 bottom-0 h-8 w-1.5 border border-[#15181c] bg-[#3c4248]">
        <i className="mt-3.5 block h-1 w-px bg-[#2ed3c6]" />
      </span>
    </div>
  );
}
